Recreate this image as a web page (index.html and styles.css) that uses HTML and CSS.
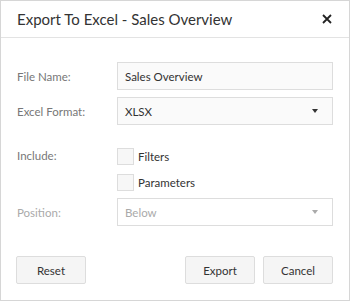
FILE: index.html
```html
<!DOCTYPE html>
<html lang="en">
<head>
    <meta charset="UTF-8">
    <title>Export To Excel</title>
    <link rel="stylesheet" href="styles.css">
</head>
<body>
    <div class="dialog">
        <div class="dialog-header">
            <span class="dialog-title">Export To Excel - Sales Overview</span>
            <span class="dialog-close">
                <svg width="10" height="10" viewBox="0 0 10 10"><path d="M1 1L9 9M9 1L1 9" stroke="#222" stroke-width="1.8"/></svg>
            </span>
        </div>

        <div class="dialog-body">
            <div class="form-row">
                <label class="form-label">File Name:</label>
                <div class="field">Sales Overview</div>
            </div>
            <div class="form-row">
                <label class="form-label">Excel Format:</label>
                <div class="field select">
                    <span>XLSX</span>
                    <span class="caret"></span>
                </div>
            </div>
            <div class="form-row include-row">
                <label class="form-label">Include:</label>
                <div class="checks">
                    <div class="check"><span class="box"></span>Filters</div>
                    <div class="check"><span class="box"></span>Parameters</div>
                </div>
            </div>
            <div class="form-row disabled">
                <label class="form-label">Position:</label>
                <div class="field select">
                    <span>Below</span>
                    <span class="caret"></span>
                </div>
            </div>
        </div>

        <div class="dialog-footer">
            <button type="button" class="btn">Reset</button>
            <div class="footer-right">
                <button type="button" class="btn">Export</button>
                <button type="button" class="btn">Cancel</button>
            </div>
        </div>
    </div>
</body>
</html>
```

FILE: styles.css
```css
body {
    margin: 0;
    font-family: Lato, "Open Sans", sans-serif;
    background-color: #fff;
}
.dialog {
    width: 350px;
    height: 301px;
    box-sizing: border-box;
    border: 1px solid #d6d6d6;
    background-color: #fff;
    display: flex;
    flex-direction: column;
}
.dialog-header {
    height: 36px;
    border-bottom: 1px solid #e3e3e3;
    display: flex;
    align-items: center;
    justify-content: space-between;
    padding: 0 16px 0 16px;
}
.dialog-title {
    font-size: 15px;
    color: #333;
}
.dialog-close {
    display: flex;
    margin-right: 1px;
}
.dialog-body {
    padding: 24px 16px 0 16px;
}
.form-row {
    display: flex;
    align-items: center;
    margin-bottom: 7px;
}
.form-label {
    width: 100px;
    font-size: 11.5px;
    color: #777;
}
.field {
    flex: 1;
    height: 26px;
    border: 1px solid #ddd;
    background-color: #fafafa;
    font-size: 11.5px;
    color: #333;
    display: flex;
    align-items: center;
    padding: 0 7px;
}
.select {
    justify-content: space-between;
    padding-right: 14px;
}
.caret {
    width: 0;
    height: 0;
    border-left: 3.5px solid transparent;
    border-right: 3.5px solid transparent;
    border-top: 4px solid #333;
}
.include-row {
    align-items: flex-start;
    margin-top: 23px;
    margin-bottom: 7px;
}
.include-row .form-label {
    padding-top: 1px;
}
.checks {
    display: flex;
    flex-direction: column;
    gap: 9px;
}
.check {
    display: flex;
    align-items: center;
    font-size: 11.5px;
    color: #333;
}
.box {
    width: 15px;
    height: 15px;
    border: 1px solid #ddd;
    background-color: #f7f7f7;
    margin-right: 4px;
}
.disabled .form-label {
    color: #aaa;
}
.disabled .field {
    color: #aaa;
    background-color: #fff;
}
.disabled .caret {
    border-top-color: #aaa;
}
.dialog-footer {
    margin-top: auto;
    padding: 0 16px 16px 15px;
    display: flex;
    justify-content: space-between;
}
.footer-right {
    display: flex;
    gap: 8px;
}
.btn {
    width: 70px;
    height: 28px;
    border: 1px solid #ddd;
    border-radius: 2px;
    background-color: #f5f5f5;
    font-family: inherit;
    font-size: 11.5px;
    color: #333;
}
```
